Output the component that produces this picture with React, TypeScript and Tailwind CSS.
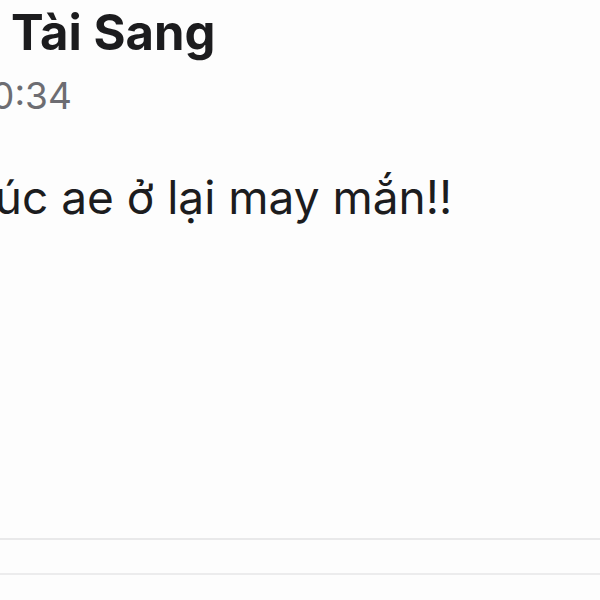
export default function App() {
  return (
    <div
      className="w-[600px] h-[600px] overflow-hidden bg-[#fdfdfd] flex flex-col"
      style={{ fontFamily: 'Inter, "Noto Sans", sans-serif' }}
    >
      {/* header */}
      <div className="pt-[4px] pl-[11px]">
        <div className="text-[49px] font-bold leading-[58px] text-[#1c1c1e] whitespace-nowrap">
          Tài Sang
        </div>
      </div>
      <div className="whitespace-nowrap -ml-[24px] mt-[12px] text-[37px] leading-[44px] text-[#6d6d72]">
        10:34
      </div>

      {/* message */}
      <div className="whitespace-nowrap -ml-[66px] mt-[51px] text-[46px] leading-[56px] text-[#1c1c1e]">
        Chúc ae ở lại may mắn!!
      </div>

      <div className="flex-1" />

      {/* footer lines */}
      <div className="h-[2px] bg-[#e9e9ea]" />
      <div className="h-[33px]" />
      <div className="h-[2px] bg-[#ececed] mb-[25px]" />
    </div>
  );
}
